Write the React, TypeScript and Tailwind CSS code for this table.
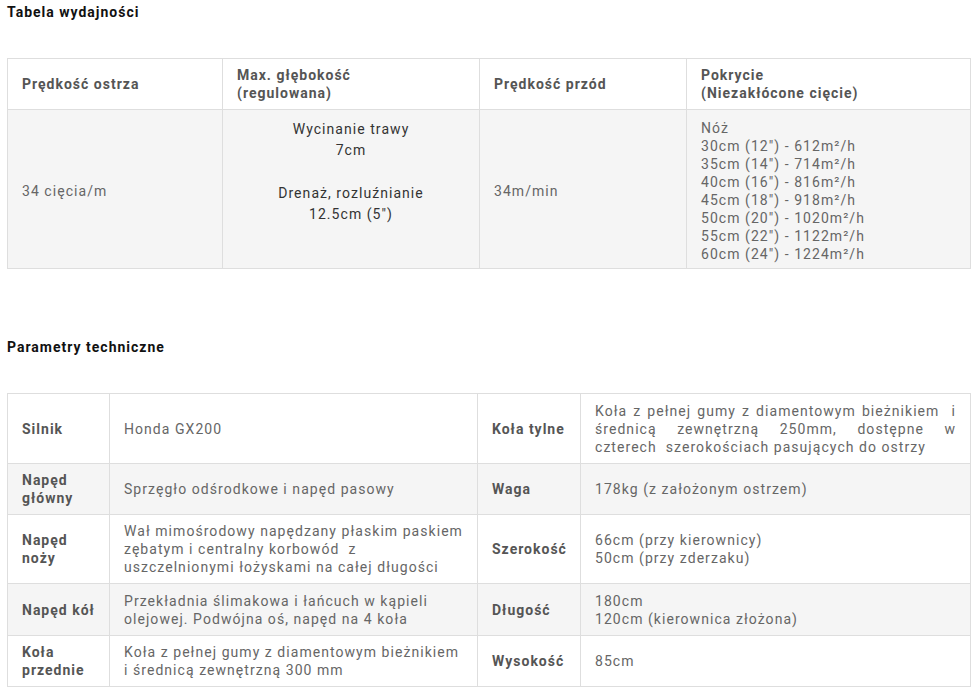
import React from 'react';

const cell = 'border border-[#dedede] px-[14px] py-[7px] leading-[18px] align-middle';
const head = `${cell} font-bold text-[#555] tracking-[1px]`;
const body = `${cell} text-[#666] tracking-[1.05px]`;

const coverage = [
  'Nóż',
  '30cm (12") - 612m²/h',
  '35cm (14") - 714m²/h',
  '40cm (16") - 816m²/h',
  '45cm (18") - 918m²/h',
  '50cm (20") - 1020m²/h',
  '55cm (22") - 1122m²/h',
  '60cm (24") - 1224m²/h',
];

function Lines({ items }: { items: string[] }) {
  return (
    <>
      {items.map((t, i) => (
        <div key={i} className="whitespace-pre">{t}</div>
      ))}
    </>
  );
}

type Spec = { label: string[]; value: React.ReactNode };

const rows: { h: string; cells: [Spec, Spec] }[] = [
  {
    h: 'h-[70px]',
    cells: [
      { label: ['Silnik'], value: <Lines items={['Honda GX200']} /> },
      {
        label: ['Koła tylne'],
        value: (
          <>
            <div className="whitespace-pre text-justify [text-align-last:justify]">Koła z pełnej gumy z diamentowym bieżnikiem  i</div>
            <div className="whitespace-pre text-justify [text-align-last:justify]">średnicą zewnętrzną 250mm, dostępne w</div>
            <div className="whitespace-pre">czterech  szerokościach pasujących do ostrzy</div>
          </>
        ),
      },
    ],
  },
  {
    h: 'h-[51px]',
    cells: [
      { label: ['Napęd', 'główny'], value: <Lines items={['Sprzęgło odśrodkowe i napęd pasowy']} /> },
      { label: ['Waga'], value: <Lines items={['178kg (z założonym ostrzem)']} /> },
    ],
  },
  {
    h: 'h-[69px]',
    cells: [
      {
        label: ['Napęd', 'noży'],
        value: (
          <Lines
            items={[
              'Wał mimośrodowy napędzany płaskim paskiem',
              'zębatym i centralny korbowód  z',
              'uszczelnionymi łożyskami na całej długości',
            ]}
          />
        ),
      },
      { label: ['Szerokość'], value: <Lines items={['66cm (przy kierownicy)', '50cm (przy zderzaku)']} /> },
    ],
  },
  {
    h: 'h-[52px]',
    cells: [
      {
        label: ['Napęd kół'],
        value: <Lines items={['Przekładnia ślimakowa i łańcuch w kąpieli', 'olejowej. Podwójna oś, napęd na 4 koła']} />,
      },
      { label: ['Długość'], value: <Lines items={['180cm', '120cm (kierownica złożona)']} /> },
    ],
  },
  {
    h: 'h-[51px]',
    cells: [
      {
        label: ['Koła', 'przednie'],
        value: <Lines items={['Koła z pełnej gumy z diamentowym bieżnikiem', 'i średnicą zewnętrzną 300 mm']} />,
      },
      { label: ['Wysokość'], value: <Lines items={['85cm']} /> },
    ],
  },
];

export default function App() {
  return (
    <div className="min-h-[693px] bg-white px-[7px] pt-[2px] text-[14px] font-['Roboto',sans-serif]">
      <h3 className="font-bold leading-5 tracking-[1px] text-[#111]">Tabela wydajności</h3>

      <table className="mt-[36px] w-[963px] table-fixed border-collapse">
        <colgroup>
          <col className="w-[215px]" />
          <col className="w-[257px]" />
          <col className="w-[207px]" />
          <col className="w-[284px]" />
        </colgroup>
        <thead>
          <tr className="bg-white text-left">
            <th className={head}>Prędkość ostrza</th>
            <th className={head}>
              Max. głębokość
              <br />
              (regulowana)
            </th>
            <th className={head}>Prędkość przód</th>
            <th className={head}>
              Pokrycie
              <br />
              (Niezakłócone cięcie)
            </th>
          </tr>
        </thead>
        <tbody>
          <tr className="bg-[#f5f5f5]">
            <td className={`${body} !pt-[9px] !pb-[5px]`}>34 cięcia/m</td>
            <td className={`${cell} !pt-[9px] !pb-[5px] !align-top text-center leading-[21px] text-[#333] tracking-[1.05px]`}>
              <p>Wycinanie trawy</p>
              <p>7cm</p>
              <p className="mt-[22px]">Drenaż, rozluźnianie</p>
              <p>12.5cm (5")</p>
            </td>
            <td className={`${body} !pt-[9px] !pb-[5px]`}>34m/min</td>
            <td className={`${body} !pt-[9px] !pb-[5px]`}>
              <Lines items={coverage} />
            </td>
          </tr>
        </tbody>
      </table>

      <h3 className="mt-[68px] font-bold leading-5 tracking-[1px] text-[#111]">Parametry techniczne</h3>

      <table className="mt-[36px] w-[963px] table-fixed border-collapse">
        <colgroup>
          <col className="w-[102px]" />
          <col className="w-[368px]" />
          <col className="w-[103px]" />
          <col className="w-[390px]" />
        </colgroup>
        <tbody>
          {rows.map((r, i) => (
            <tr key={i} className={`${r.h} ${i % 2 === 1 ? 'bg-[#f5f5f5]' : 'bg-white'}`}>
              {r.cells.map((s, j) => (
                <React.Fragment key={j}>
                  <td className={head}>
                    <Lines items={s.label} />
                  </td>
                  <td className={body}>{s.value}</td>
                </React.Fragment>
              ))}
            </tr>
          ))}
        </tbody>
      </table>
    </div>
  );
}
